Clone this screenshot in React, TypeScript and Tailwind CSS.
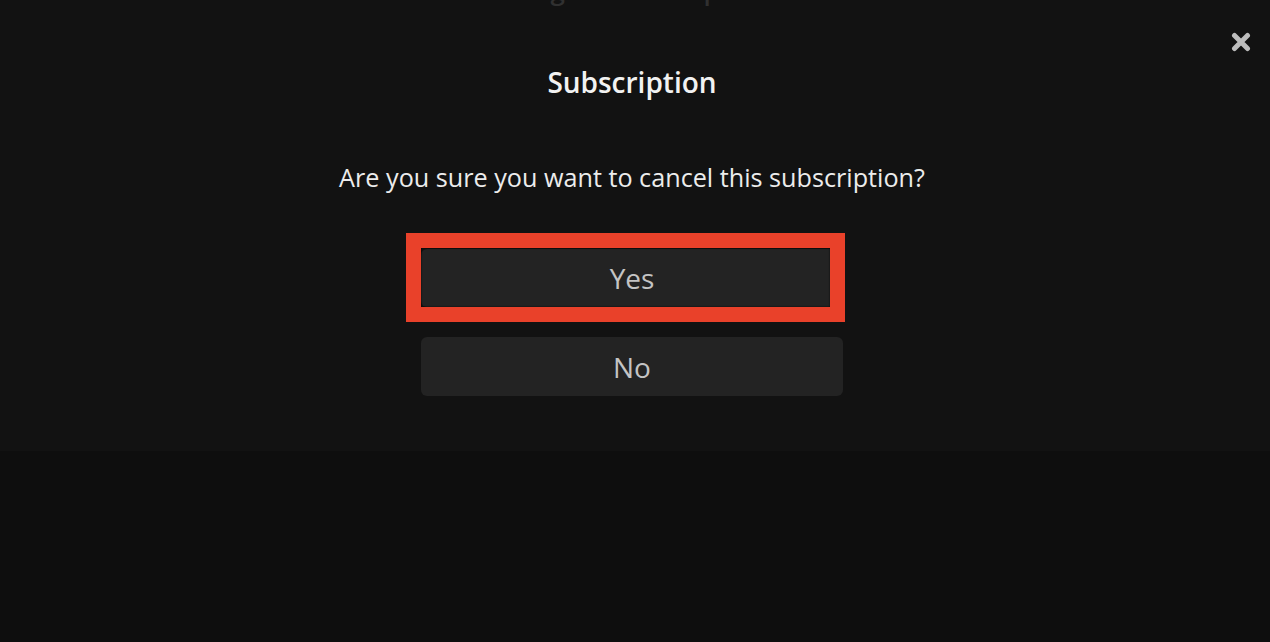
import React from "react";

export default function App() {
  return (
    <div
      className="relative h-[642px] w-full overflow-hidden bg-[#0e0e0e]"
      style={{ fontFamily: '"Open Sans", "Noto Sans", sans-serif' }}
    >
      <div className="relative flex h-[451px] flex-col items-center bg-[#121212] pr-[6px]">
        <div className="-mt-[26px] h-[32px] text-[26px] leading-[32px] font-semibold tracking-[1px] text-[#303030]">
          Manage · Subscriptions
        </div>

        <button
          aria-label="Close"
          className="absolute right-[19px] top-[32px] flex h-[20px] w-[20px] items-center justify-center"
        >
          <svg width="20" height="20" viewBox="0 0 20 20">
            <path
              d="M3.5 3.5 L16.5 16.5 M16.5 3.5 L3.5 16.5"
              stroke="#bdbdbd"
              strokeWidth="5"
              strokeLinecap="round"
            />
          </svg>
        </button>

        <h1 className="mt-[56px] text-[28px] leading-[40px] font-semibold text-[#f2f2f2]">
          Subscription
        </h1>

        <p className="mt-[58px] text-[25.2px] leading-[34px] text-[#ececec]">
          Are you sure you want to cancel this subscription?
        </p>

        <div className="relative mt-[55px] w-[422px]">
          <button className="flex h-[58px] w-full items-center justify-center rounded-md bg-[#232323] text-[28px] text-[#c4c4c4]">
            Yes
          </button>
          <div className="pointer-events-none absolute -left-[15px] -top-[16px] h-[89px] w-[439px] border-[15px] border-[#e9412a] shadow-[inset_0_0_2px_rgba(0,0,0,0.9)]" />
        </div>

        <button className="mt-[30px] flex h-[59px] w-[422px] items-center justify-center rounded-md bg-[#232323] text-[28px] text-[#c4c4c4]">
          No
        </button>
      </div>
    </div>
  );
}
